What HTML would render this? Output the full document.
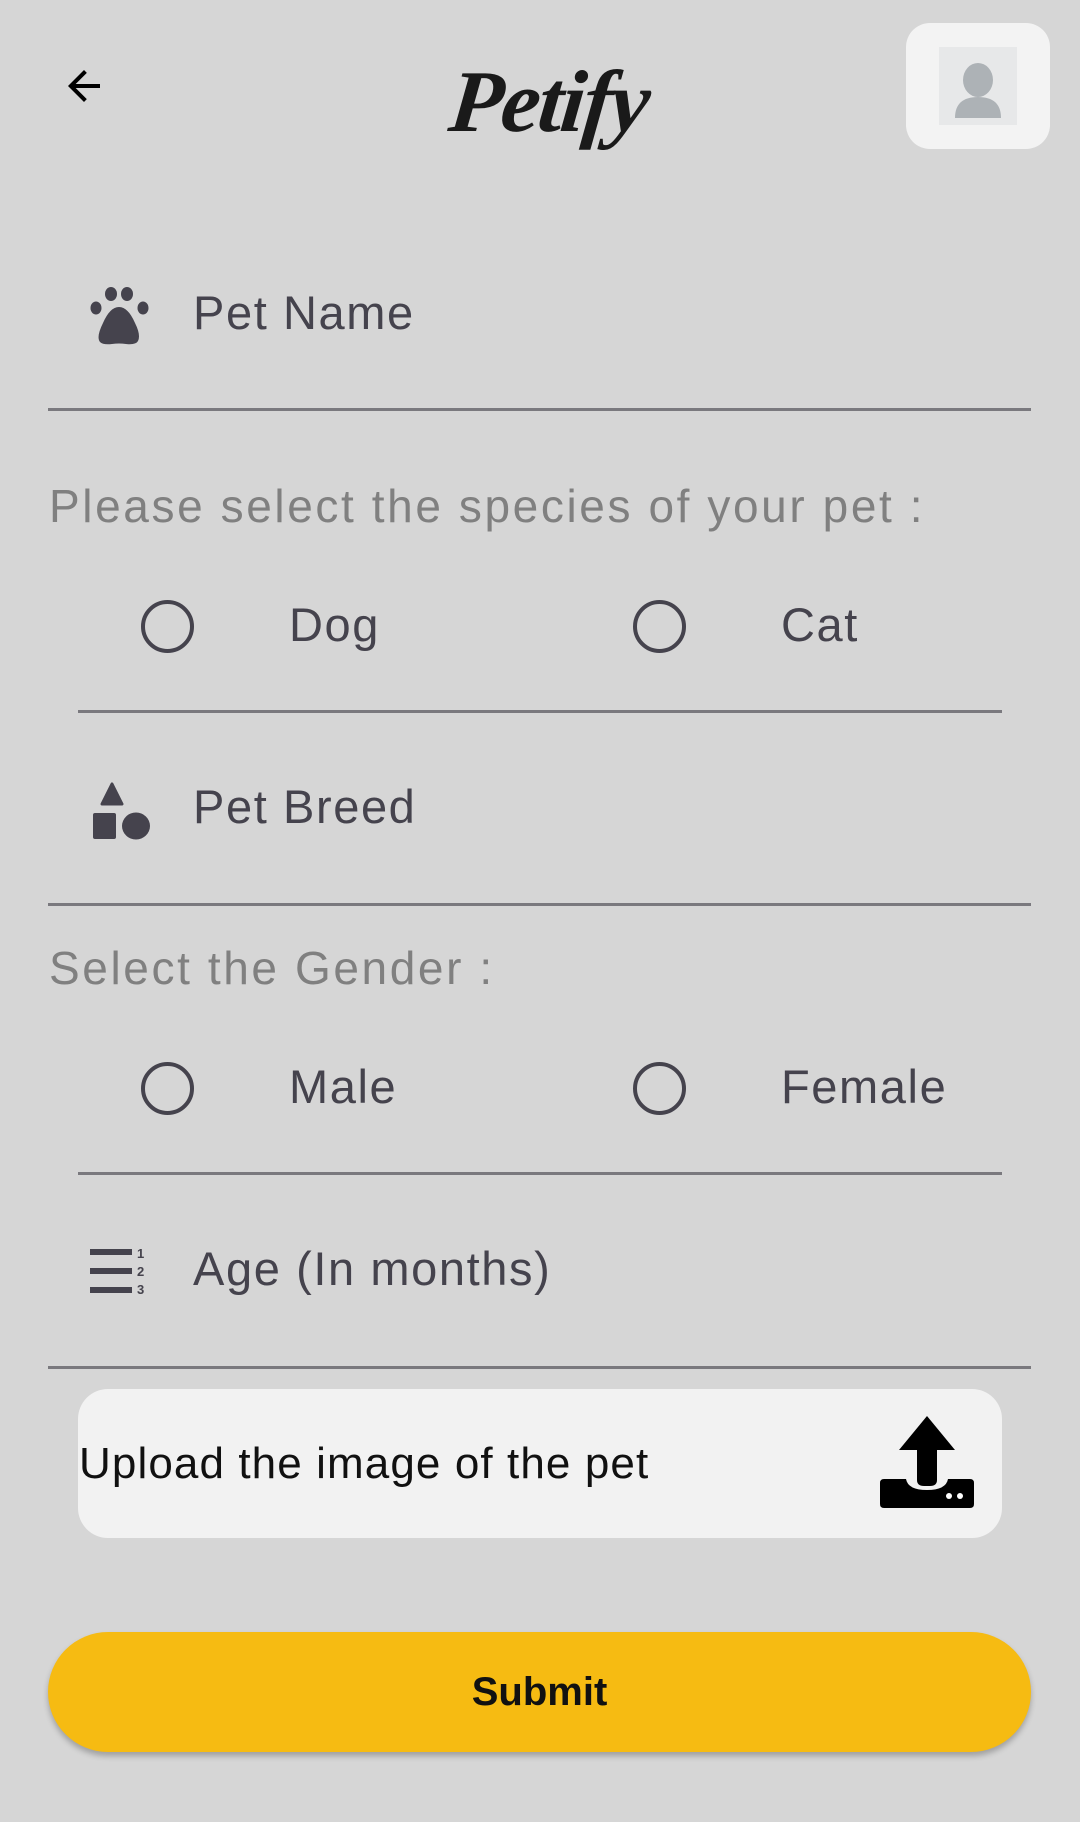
<!DOCTYPE html>
<html><head><meta charset="utf-8"><style>
html,body{margin:0;padding:0}
body{width:1080px;height:1822px;background:#d6d6d6;position:relative;overflow:hidden;font-family:"Liberation Sans",Roboto,sans-serif}
.a{position:absolute}
.t{position:absolute;height:60px;line-height:60px;white-space:nowrap}
.line{position:absolute;height:3px;background:#7a797e}
.lbl{color:#45434d;font-size:47px;letter-spacing:1.6px}
.hint{color:#808080;font-size:46px;letter-spacing:2.6px}
.radio{position:absolute;width:53px;height:53px;border:4.5px solid #45434d;border-radius:50%;box-sizing:border-box}
</style></head><body>

<svg class="a" style="left:58px;top:62px" width="52" height="48" viewBox="0 0 24 24"><path d="M20 11H7.83l5.59-5.59L12 4l-8 8 8 8 1.41-1.41L7.83 13H20z" fill="#000"/></svg>

<div class="t" style="left:0;width:1098px;text-align:center;top:58px;height:90px;line-height:90px;font-family:'Liberation Serif',serif;font-style:italic;font-weight:bold;font-size:88px;color:#1a1a1a;letter-spacing:-2px;transform:skewX(-6deg)">Petify</div>

<div class="a" style="left:906px;top:23px;width:144px;height:126px;background:#f3f3f3;border-radius:24px"></div>
<div class="a" style="left:939px;top:47px;width:78px;height:78px;background:#e7e8e9"></div>
<svg class="a" style="left:939px;top:47px" width="78" height="78" viewBox="0 0 78 78"><ellipse cx="39" cy="33" rx="15" ry="17" fill="#adb2b6"/><path d="M16 71 Q16 50 39 50 Q62 50 62 71 Z" fill="#adb2b6"/></svg>

<svg class="a" style="left:90px;top:285px" width="62" height="62" viewBox="0 0 62 62"><ellipse cx="21" cy="9" rx="6" ry="7" fill="#45434d"/><ellipse cx="37" cy="9" rx="6" ry="7" fill="#45434d"/><ellipse cx="6" cy="23" rx="5.5" ry="6.5" fill="#45434d"/><ellipse cx="53" cy="23" rx="5.5" ry="6.5" fill="#45434d"/><path d="M29 22 Q20 22 13 38 Q6 52 10 57 Q13 60 22 59 Q29 58 36 59 Q46 60 48 56 Q51 50 45 38 Q38 22 29 22Z" fill="#45434d"/></svg>
<div class="t lbl" style="left:193px;top:283px">Pet Name</div>
<div class="line" style="left:48px;width:983px;top:408px"></div>

<div class="t hint" style="left:49px;top:476px">Please select the species of your pet :</div>
<div class="radio" style="left:141px;top:600px"></div>
<div class="t lbl" style="left:289px;top:595px">Dog</div>
<div class="radio" style="left:633px;top:600px"></div>
<div class="t lbl" style="left:781px;top:595px">Cat</div>
<div class="line" style="left:78px;width:924px;top:710px"></div>

<svg class="a" style="left:92px;top:782px" width="60" height="58" viewBox="0 0 60 58"><path d="M20 2 L30 22 L10 22Z" fill="#45434d" stroke="#45434d" stroke-width="3" stroke-linejoin="round"/><rect x="1" y="31" width="23" height="26" rx="2" fill="#45434d"/><ellipse cx="44" cy="44" rx="14" ry="13.5" fill="#45434d"/></svg>
<div class="t lbl" style="left:193px;top:777px">Pet Breed</div>
<div class="line" style="left:48px;width:983px;top:903px"></div>

<div class="t hint" style="left:49px;top:938px">Select the Gender :</div>
<div class="radio" style="left:141px;top:1062px"></div>
<div class="t lbl" style="left:289px;top:1057px">Male</div>
<div class="radio" style="left:633px;top:1062px"></div>
<div class="t lbl" style="left:781px;top:1057px">Female</div>
<div class="line" style="left:78px;width:924px;top:1172px"></div>

<svg class="a" style="left:90px;top:1246px" width="60" height="50" viewBox="0 0 60 50"><rect x="0" y="3" width="42" height="6" fill="#45434d"/><rect x="0" y="22" width="42" height="6" fill="#45434d"/><rect x="0" y="41" width="42" height="6" fill="#45434d"/><text x="47" y="12" font-size="13" font-weight="bold" fill="#45434d" font-family="Liberation Sans">1</text><text x="47" y="30" font-size="13" font-weight="bold" fill="#45434d" font-family="Liberation Sans">2</text><text x="47" y="48" font-size="13" font-weight="bold" fill="#45434d" font-family="Liberation Sans">3</text></svg>
<div class="t lbl" style="left:193px;top:1239px">Age (In months)</div>
<div class="line" style="left:48px;width:983px;top:1366px"></div>

<div class="a" style="left:78px;top:1389px;width:924px;height:149px;background:#f2f2f2;border-radius:30px"></div>
<div class="t" style="left:79px;top:1434px;font-size:44px;letter-spacing:1.1px;color:#111">Upload the image of the pet</div>
<svg class="a" style="left:880px;top:1416px" width="94" height="92" viewBox="0 0 94 92"><path d="M47 0 L75 34 L57 34 L57 64 Q57 70 50 70 L44 70 Q37 70 37 64 L37 34 L19 34 Z" fill="#000"/><path d="M0 67 Q0 63 4 63 L26 63 Q28 74 47 74 Q66 74 68 63 L90 63 Q94 63 94 67 L94 88 Q94 92 90 92 L4 92 Q0 92 0 88Z" fill="#000"/><circle cx="69" cy="80" r="3" fill="#fff"/><circle cx="80" cy="80" r="3" fill="#fff"/></svg>

<div class="a" style="left:48px;top:1632px;width:983px;height:120px;background:#f6bb12;border-radius:60px;box-shadow:0 4px 6px rgba(0,0,0,0.25)"></div>
<div class="t" style="left:48px;width:983px;text-align:center;top:1662px;font-size:40px;font-weight:bold;color:#111">Submit</div>

</body></html>
